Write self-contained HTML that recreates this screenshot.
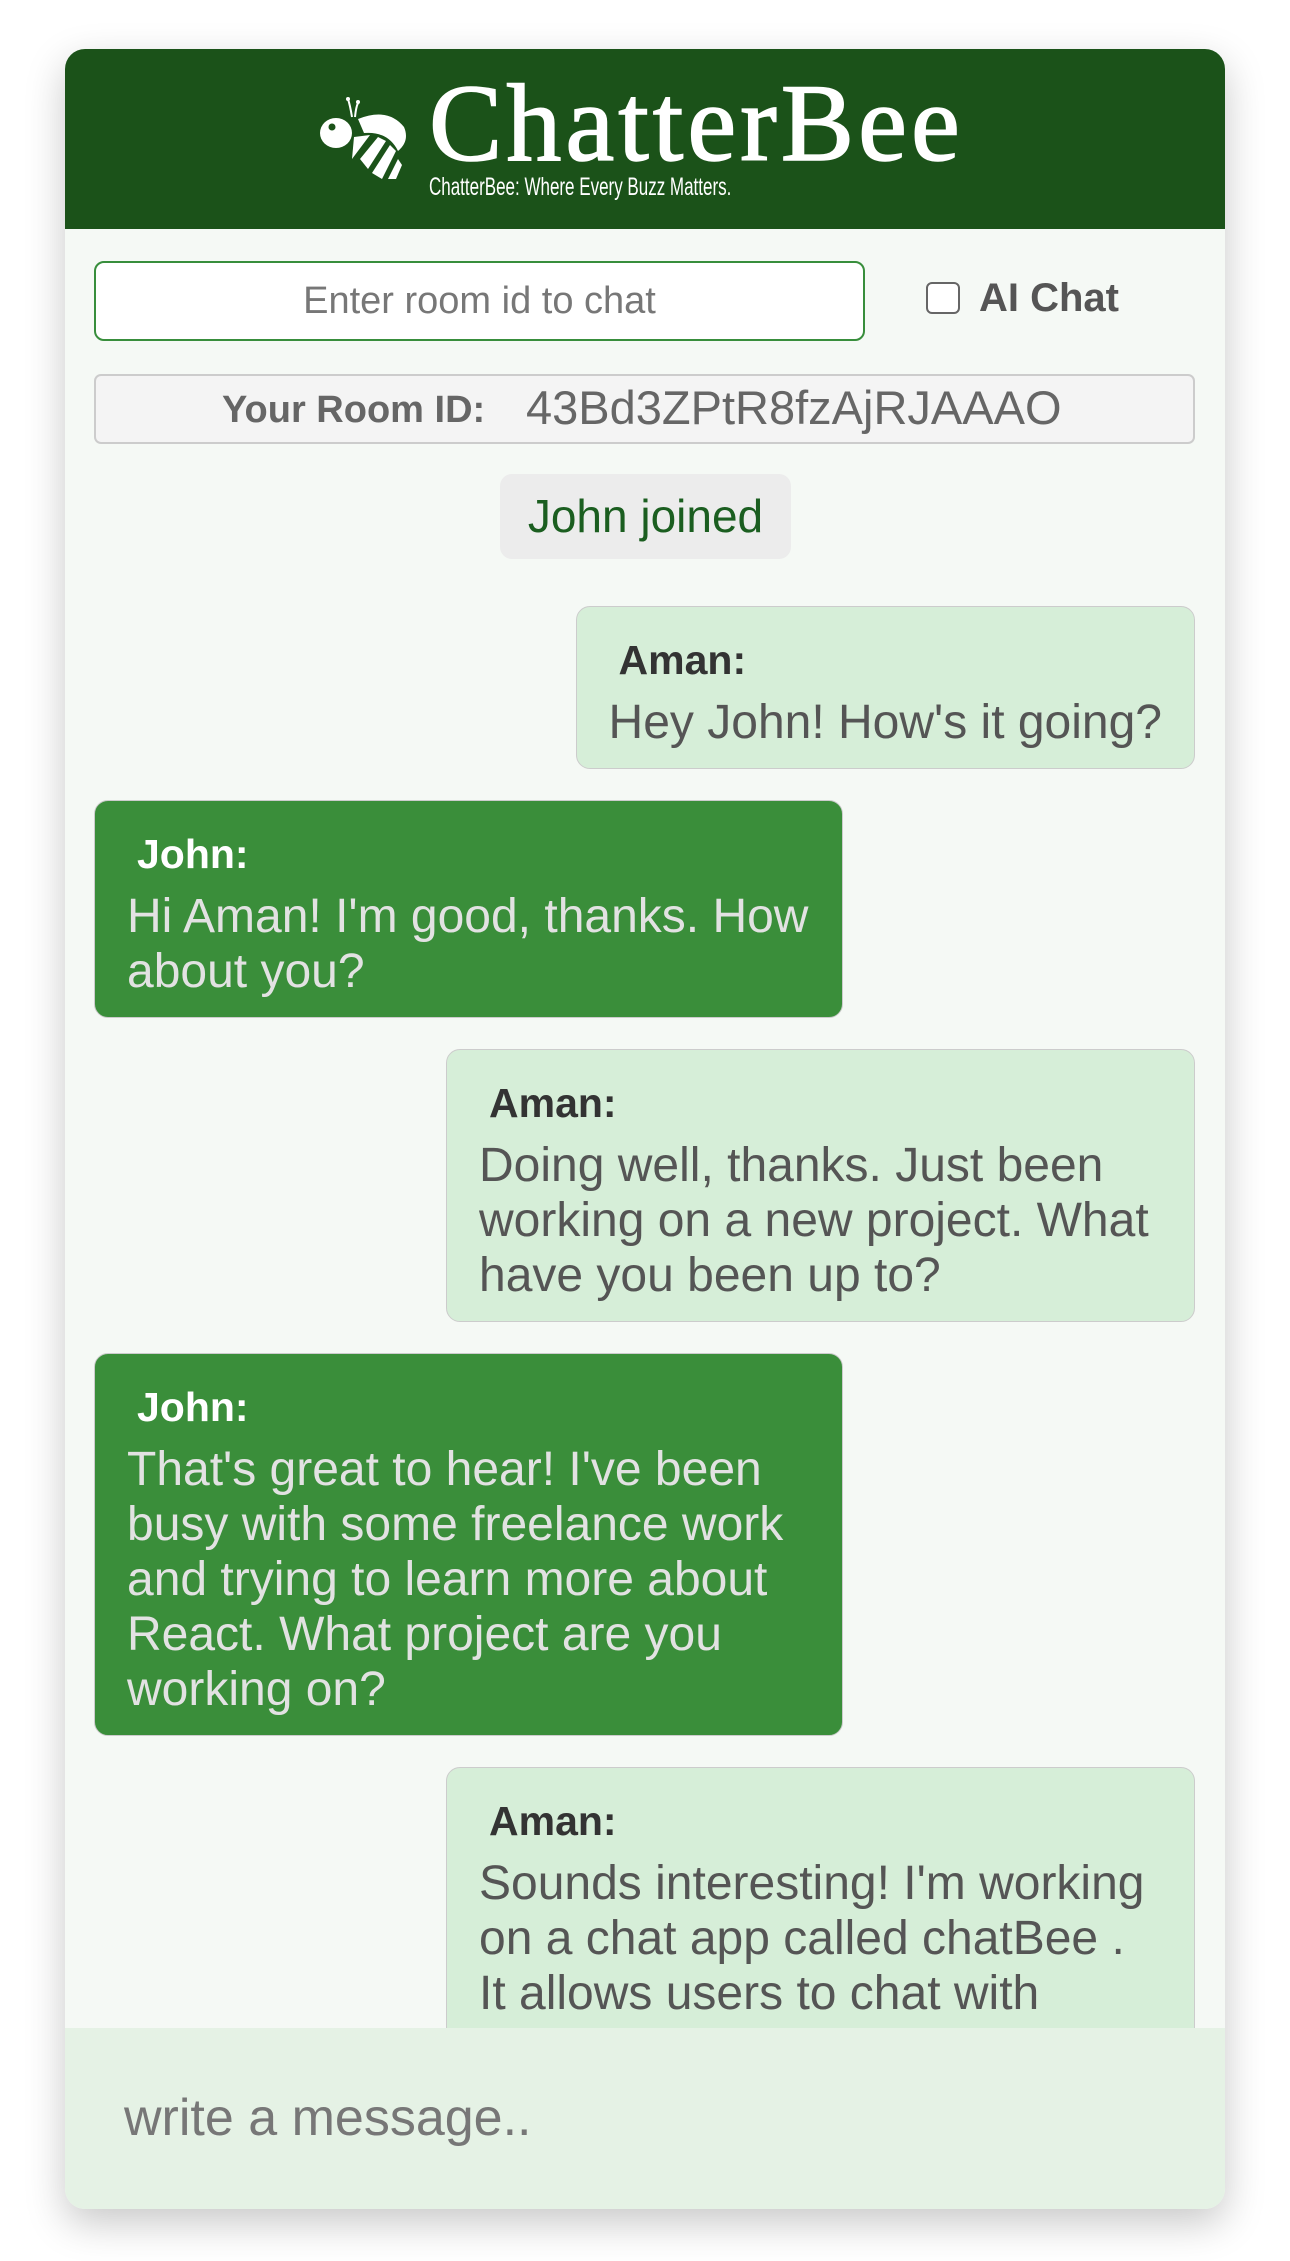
<!DOCTYPE html>
<html><head><meta charset="utf-8"><style>
*{box-sizing:border-box;margin:0;padding:0}
body{width:1290px;height:2261px;background:#fff;font-family:"Liberation Sans",Arial,sans-serif;position:relative;overflow:hidden}
.card{position:absolute;left:65px;top:49px;width:1160px;height:2160px;background:#f5f9f5;border-radius:20px;box-shadow:0 14px 40px rgba(0,0,0,.22);overflow:hidden}
.hdr{position:absolute;left:0;top:0;width:1160px;height:180px;background:#1b5219}
.title{position:absolute;left:364px;top:14px;font-family:"Liberation Serif",serif;font-size:110px;color:#fff;letter-spacing:4px;line-height:120px;white-space:nowrap;-webkit-text-stroke:1.5px #fff}
.tag{position:absolute;left:364px;top:124px;font-size:25px;color:#fff;white-space:nowrap;transform:scaleX(.68);transform-origin:left top}
.inp{position:absolute;left:29px;top:212px;width:771px;height:80px;border:2px solid #388e3c;border-radius:10px;background:#fff;font-size:38px;color:#777;text-align:center;line-height:76px}
.cb{position:absolute;left:861px;top:233px;width:34px;height:32px;border:2.5px solid #666;border-radius:6px;background:#fff}
.ai{position:absolute;left:914px;top:224px;font-size:40px;font-weight:bold;color:#555;line-height:50px}
.rid{position:absolute;left:29px;top:325px;width:1101px;height:70px;border:2px solid #ccc;border-radius:7px;background:#f4f4f4;color:#666;white-space:nowrap}
.rid b{position:absolute;left:126px;top:11px;font-size:38px;line-height:46px}
.rid span{position:absolute;left:430px;top:6px;font-size:47px;line-height:52px}
.join{position:absolute;left:435px;top:425px;width:291px;height:85px;background:#ececec;border-radius:12px;color:#1b5e20;font-size:46px;text-align:center;line-height:85px}
.msgs{position:absolute;left:29px;top:557px;width:1101px;height:1422px;overflow:hidden}
.m{max-width:749px;border:1.5px solid #ccc;border-radius:14px;padding:30px 32px 18px 32px;margin-bottom:31px;font-size:48px;line-height:55px;width:fit-content}
.m b{display:block;font-size:41px;line-height:47px;padding-left:10px;margin-bottom:11px}
.a{margin-left:auto;background:#d6eed8;color:#555}
.a b{color:#333}
.j{background:#3a8e3a;color:#e2e2e2}
.j b{color:#fff}
.ftr{position:absolute;left:0;top:1979px;width:1160px;height:181px;background:#e5f2e5}
.ftr div{position:absolute;left:59px;top:60px;font-size:52px;color:#777;line-height:60px}
</style></head><body>
<div class="card">
 <div class="hdr">
  <svg style="position:absolute;left:253px;top:48px" width="96" height="86" viewBox="0 0 96 86">
   <path d="M34 20 Q32 8 30 2 M37 20 Q38 10 40 6" stroke="#fff" stroke-width="2" fill="none"/>
   <circle cx="30" cy="2" r="2" fill="#fff"/><circle cx="40" cy="5" r="2" fill="#fff"/>
   <ellipse cx="18" cy="36" rx="16" ry="15" fill="#fff"/>
   <circle cx="14" cy="30" r="3.5" fill="#1b5219"/>
   <path d="M40 22 Q70 10 86 30 Q92 44 80 54 Q70 34 46 36 Z" fill="#fff"/>
   <path d="M36 40 L52 38 L34 62 Z" fill="#fff"/>
   <path d="M42 62 L60 40 L68 44 L50 72 Z" fill="#fff"/>
   <path d="M54 76 L72 48 L78 54 L64 82 Z" fill="#fff"/>
   <path d="M70 82 L80 62 L84 68 L78 82 Z" fill="#fff"/>
  </svg>
  <div class="title">ChatterBee</div>
  <div class="tag">ChatterBee: Where Every Buzz Matters.</div>
 </div>
 <div class="inp">Enter room id to chat</div>
 <div class="cb"></div>
 <div class="ai">AI Chat</div>
 <div class="rid"><b>Your Room ID:</b><span>43Bd3ZPtR8fzAjRJAAAO</span></div>
 <div class="join">John joined</div>
 <div class="msgs">
  <div class="m a"><b>Aman:</b>Hey John! How's it going?</div>
  <div class="m j"><b>John:</b>Hi Aman! I'm good, thanks. How about you?</div>
  <div class="m a"><b>Aman:</b>Doing well, thanks. Just been working on a new project. What have you been up to?</div>
  <div class="m j"><b>John:</b>That's great to hear! I've been busy with some freelance work and trying to learn more about React. What project are you working on?</div>
  <div class="m a"><b>Aman:</b>Sounds interesting! I'm working on a chat app called chatBee .<br>It allows users to chat with<br>each other in real time and more.</div>
 </div>
 <div class="ftr"><div>write a message..</div></div>
</div>
</body></html>
